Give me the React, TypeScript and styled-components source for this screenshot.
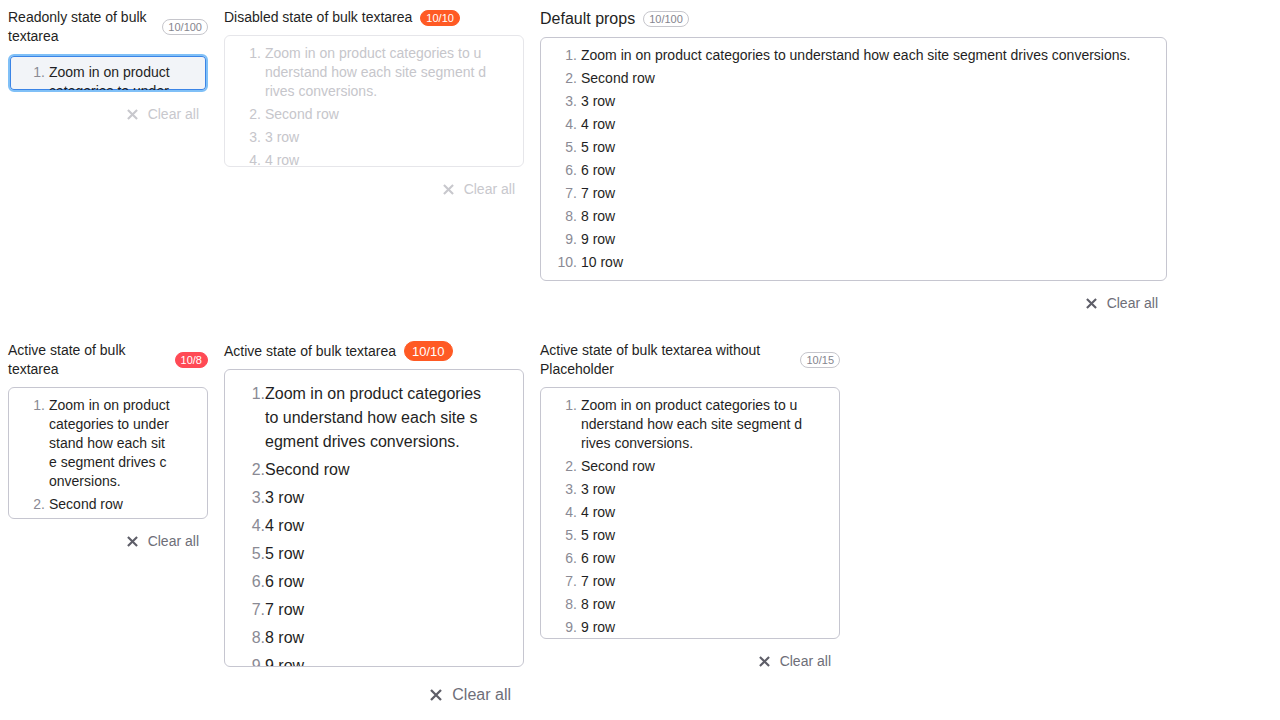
import styled, { createGlobalStyle, css } from "styled-components";

const GlobalStyle = createGlobalStyle`
  * {
    box-sizing: border-box;
  }
  body {
    margin: 0;
    background: #ffffff;
    font-family: "Liberation Sans", Arial, sans-serif;
    color: #1f1f24;
  }
`;

type Size = "m" | "l";
type State = "default" | "readonly" | "disabled";
type Tone = "outline" | "orange" | "red";

const Page = styled.div`
  display: flex;
  flex-wrap: wrap;
  align-items: flex-start;
  column-gap: 16px;
  row-gap: 24px;
  padding: 8px;
`;

const Field = styled.div<{ $width: number }>`
  width: ${(p) => p.$width}px;
  display: flex;
  flex-direction: column;
`;

const Header = styled.div`
  display: flex;
  align-items: center;
  gap: 8px;
  margin-bottom: 8px;
`;

const Label = styled.div<{ $big?: boolean }>`
  font-size: ${(p) => (p.$big ? 16 : 14)}px;
  line-height: ${(p) => (p.$big ? 21 : 19)}px;
  color: #1f1f24;
`;

const Counter = styled.span<{ $tone: Tone; $size: Size }>`
  flex-shrink: 0;
  display: inline-flex;
  align-items: center;
  border-radius: 999px;
  white-space: nowrap;
  height: ${(p) => (p.$size === "l" ? 20 : 16)}px;
  padding: 0 ${(p) => (p.$size === "l" ? 7 : 5)}px;
  font-size: ${(p) => (p.$size === "l" ? 13 : 11)}px;
  ${(p) =>
    p.$tone === "outline"
      ? css`
          border: 1px solid #c6c6cc;
          color: #85858e;
        `
      : css`
          border: 1px solid ${p.$tone === "orange" ? "#ff5a24" : "#ff4a55"};
          background: ${p.$tone === "orange" ? "#ff5a24" : "#ff4a55"};
          color: #ffffff;
        `}
`;

const Box = styled.div<{ $state: State; $size: Size; $max?: number }>`
  border-radius: 6px;
  overflow: hidden;
  background: #ffffff;
  border: 1px solid #c6c6d0;
  padding: ${(p) => (p.$size === "l" ? "12px 38px 11px 12px" : "8px 35px 8px 12px")};
  max-height: ${(p) => (p.$max ? `${p.$max}px` : "none")};
  ${(p) =>
    p.$state === "disabled" &&
    css`
      border-color: #e6e6ea;
    `}
  ${(p) =>
    p.$state === "readonly" &&
    css`
      border: 2px solid #80c0f7;
      box-shadow: inset 0 0 0 1px #3b84e6;
      background: #f2f4f8;
      padding-left: 11px;
      padding-top: 7px;
    `}
`;

const List = styled.ol`
  list-style: none;
  margin: 0;
  padding: 0;
  display: flex;
  flex-direction: column;
  gap: 4px;
`;

const Row = styled.li<{ $size: Size; $muted: boolean }>`
  display: flex;
  font-size: ${(p) => (p.$size === "l" ? 16 : 14)}px;
  line-height: ${(p) => (p.$size === "l" ? 24 : 19)}px;
  color: ${(p) => (p.$muted ? "#c6c6cb" : "#1f1f24")};
`;

const Num = styled.span<{ $size: Size; $muted: boolean }>`
  flex-shrink: 0;
  text-align: right;
  width: ${(p) => (p.$size === "l" ? 28 : 24)}px;
  margin-right: ${(p) => (p.$size === "l" ? 0 : 4)}px;
  color: ${(p) => (p.$muted ? "#c6c6cb" : "#8a8a94")};
`;

const Text = styled.span`
  min-width: 0;
  word-break: break-all;
`;

const Footer = styled.div<{ $size: Size }>`
  display: flex;
  justify-content: flex-end;
  margin-top: 8px;
  padding-right: ${(p) => (p.$size === "l" ? 13 : 9)}px;
`;

const ClearButton = styled.button<{ $size: Size; $muted: boolean }>`
  display: inline-flex;
  align-items: center;
  gap: 10px;
  height: ${(p) => (p.$size === "l" ? 40 : 28)}px;
  padding: 0;
  border: none;
  background: none;
  font-family: inherit;
  font-size: ${(p) => (p.$size === "l" ? 16 : 14)}px;
  color: ${(p) => (p.$muted ? "#c8c8cd" : "#6e6e78")};
  cursor: ${(p) => (p.$muted ? "default" : "pointer")};
  svg {
    color: ${(p) => (p.$muted ? "#c8c8cd" : "#5e5e68")};
  }
`;

const rows = [
  "Zoom in on product categories to understand how each site segment drives conversions.",
  "Second row",
  "3 row",
  "4 row",
  "5 row",
  "6 row",
  "7 row",
  "8 row",
  "9 row",
  "10 row",
];

function CrossIcon({ size }: { size: number }) {
  return (
    <svg width={size} height={size} viewBox="0 0 12 12" fill="none">
      <path d="M1 1l10 10M11 1L1 11" stroke="currentColor" strokeWidth="2.3" />
    </svg>
  );
}

type BulkProps = {
  label: string;
  counter: string;
  tone: Tone;
  width: number;
  size?: Size;
  state?: State;
  maxHeight?: number;
  bigLabel?: boolean;
};

function BulkTextarea({
  label,
  counter,
  tone,
  width,
  size = "m",
  state = "default",
  maxHeight,
  bigLabel,
}: BulkProps) {
  const muted = state === "disabled";
  const footerMuted = state !== "default";
  return (
    <Field $width={width}>
      <Header>
        <Label $big={bigLabel}>{label}</Label>
        <Counter $tone={tone} $size={size}>
          {counter}
        </Counter>
      </Header>
      <Box $state={state} $size={size} $max={maxHeight}>
        <List>
          {rows.map((r, i) => (
            <Row key={i} $size={size} $muted={muted}>
              <Num $size={size} $muted={muted}>
                {i + 1}.
              </Num>
              <Text>{r}</Text>
            </Row>
          ))}
        </List>
      </Box>
      <Footer $size={size}>
        <ClearButton $size={size} $muted={footerMuted}>
          <CrossIcon size={size === "l" ? 12 : 11} />
          Clear all
        </ClearButton>
      </Footer>
    </Field>
  );
}

export default function App() {
  return (
    <>
      <GlobalStyle />
      <Page>
        <BulkTextarea
          label="Readonly state of bulk textarea"
          counter="10/100"
          tone="outline"
          width={200}
          state="readonly"
          maxHeight={38}
        />
        <BulkTextarea
          label="Disabled state of bulk textarea"
          counter="10/10"
          tone="orange"
          width={300}
          state="disabled"
          maxHeight={132}
        />
        <BulkTextarea label="Default props" counter="10/100" tone="outline" width={627} bigLabel />
        <BulkTextarea
          label="Active state of bulk textarea"
          counter="10/8"
          tone="red"
          width={200}
          maxHeight={132}
        />
        <BulkTextarea
          label="Active state of bulk textarea"
          counter="10/10"
          tone="orange"
          width={300}
          size="l"
          maxHeight={298}
        />
        <BulkTextarea
          label="Active state of bulk textarea without Placeholder"
          counter="10/15"
          tone="outline"
          width={300}
          maxHeight={252}
        />
      </Page>
    </>
  );
}
